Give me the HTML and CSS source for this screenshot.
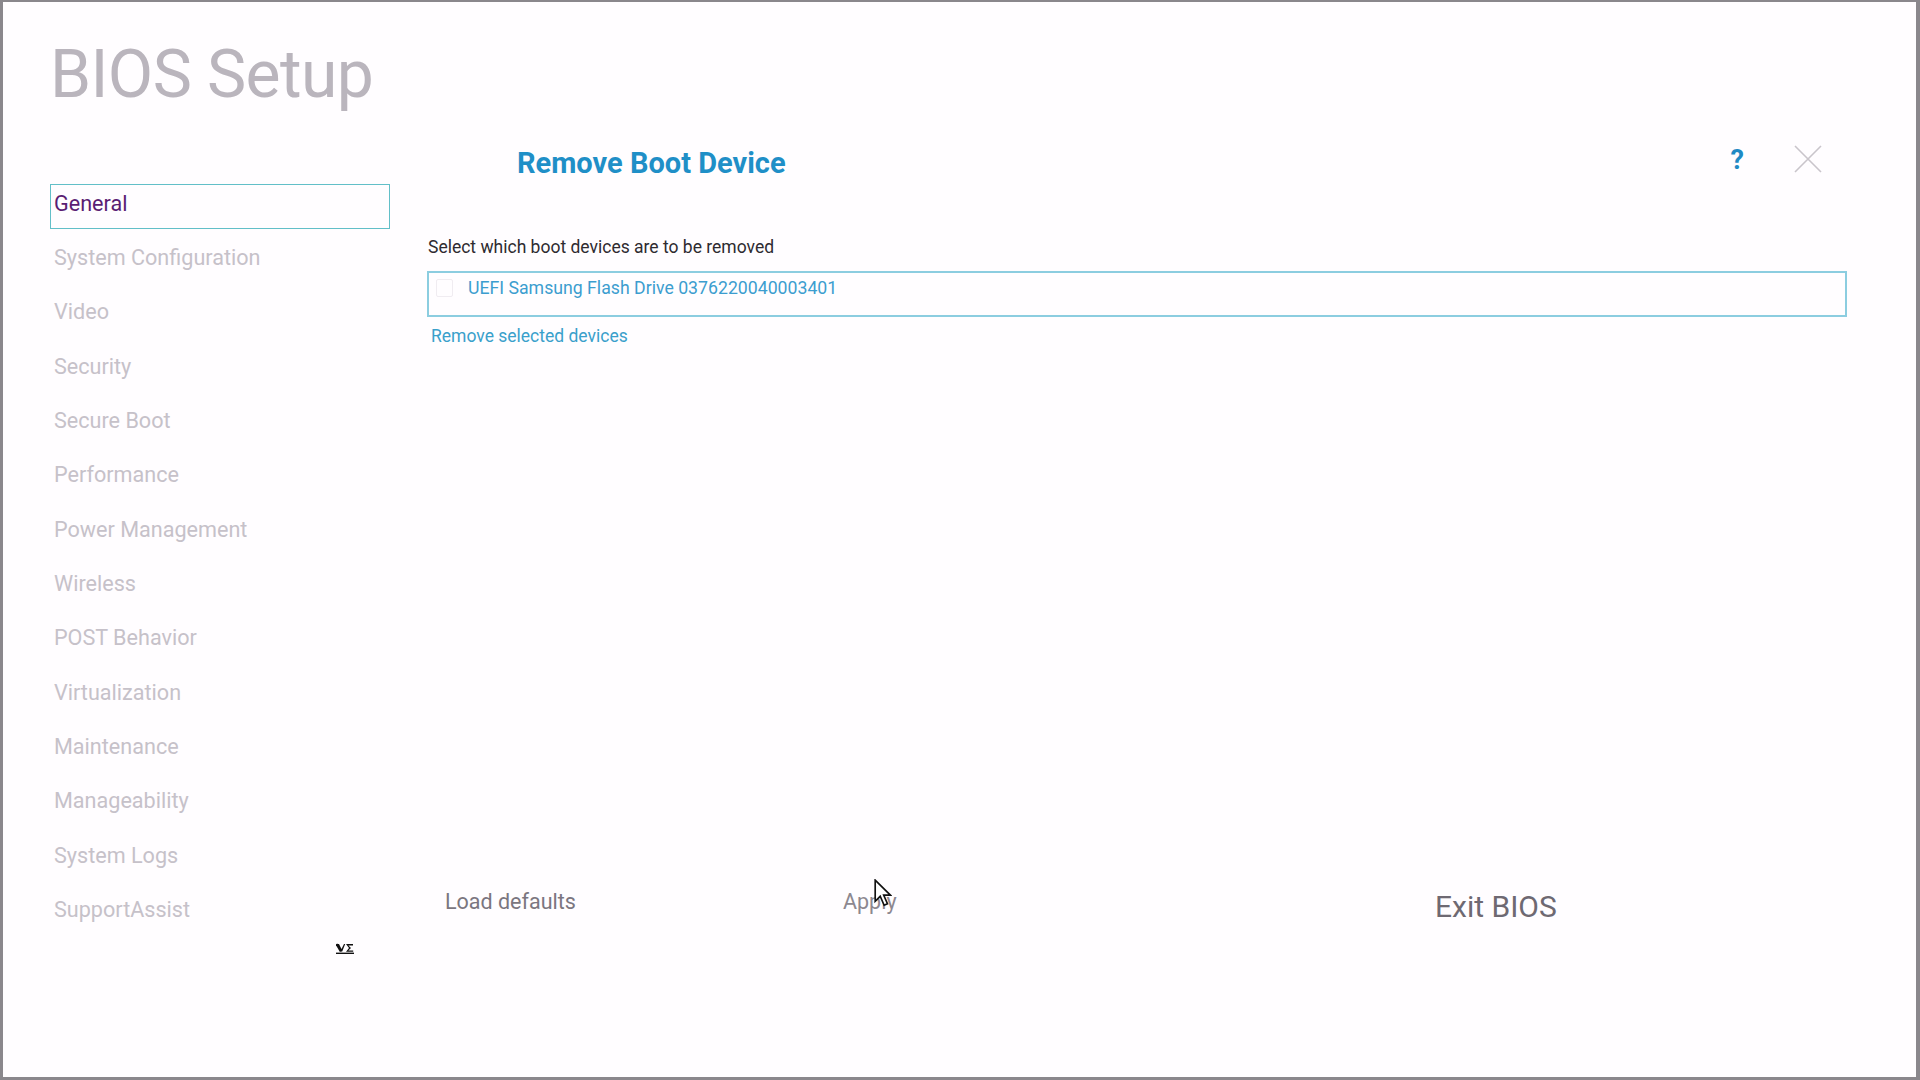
FILE: index.html
```html
<!DOCTYPE html>
<html lang="en">
<head>
<meta charset="utf-8">
<title>BIOS Setup</title>
<link rel="stylesheet" href="styles.css">
</head>
<body>
<div class="frame">
  <h1 class="app-title">BIOS Setup</h1>
  <div class="main">
    <aside class="sidebar">
      <ul class="nav">
        <li class="nav-item active">General</li>
        <li class="nav-item">System Configuration</li>
        <li class="nav-item">Video</li>
        <li class="nav-item">Security</li>
        <li class="nav-item">Secure Boot</li>
        <li class="nav-item">Performance</li>
        <li class="nav-item">Power Management</li>
        <li class="nav-item">Wireless</li>
        <li class="nav-item">POST Behavior</li>
        <li class="nav-item">Virtualization</li>
        <li class="nav-item">Maintenance</li>
        <li class="nav-item">Manageability</li>
        <li class="nav-item">System Logs</li>
        <li class="nav-item">SupportAssist</li>
      </ul>
      <div class="mini-icon">
        <svg width="18" height="12" viewBox="0 0 18 12">
          <path d="M0.5 1 L3 1 L5.5 6 L8 1 L9.2 1 L6.2 8.5 L4.8 8.5 Z" fill="#111"/>
          <path d="M0.5 1 L4.8 8.5" stroke="#111" stroke-width="2"/>
          <path d="M10 1 H17 V2.4 H12.4 L15 5 L12.4 7.6 H17.2 V8.8 H10 L13 5 Z" fill="#111"/>
          <rect x="0" y="9.6" width="18" height="1.4" fill="#111"/>
        </svg>
      </div>
    </aside>
    <section class="content">
      <div class="dialog-head">
        <h2 class="dialog-title">Remove Boot Device</h2>
        <span class="help">?</span>
        <span class="close">
          <svg width="28" height="28" viewBox="0 0 28 28">
            <path d="M1 1 L27 27 M27 1 L1 27" stroke="#c9c5cb" stroke-width="1.6"/>
          </svg>
        </span>
      </div>
      <p class="prompt">Select which boot devices are to be removed</p>
      <div class="device-list">
        <span class="checkbox"></span>
        <span class="device-name">UEFI Samsung Flash Drive 0376220040003401</span>
      </div>
      <a class="remove-link">Remove selected devices</a>
      <div class="footer">
        <span class="btn btn-load">Load defaults</span>
        <span class="btn btn-apply">Apply</span>
        <span class="btn btn-exit">Exit BIOS</span>
      </div>
    </section>
  </div>
  <svg class="cursor" width="18" height="29" viewBox="0 0 16 26">
    <path d="M1 1 L1 20 L5.5 15.5 L9 23.5 L12 22.2 L8.6 14.4 L14.6 14.4 Z" fill="#fff" stroke="#111" stroke-width="1.5" stroke-linejoin="miter"/>
  </svg>
</div>
</body>
</html>
```

FILE: styles.css
```css
* { box-sizing: border-box; }

html, body {
  margin: 0;
  padding: 0;
  background: #fff;
}

body {
  font-family: Roboto, "Liberation Sans", Arial, sans-serif;
}

.frame {
  position: relative;
  width: 1920px;
  height: 1080px;
  border-top: 2px solid #8a878c;
  border-left: 3px solid #8a878c;
  border-right: 4px solid #8a878c;
  border-bottom: 3px solid #8a878c;
  background: #fffdff;
  overflow: hidden;
}

.app-title {
  margin: 40px 0 0 47px;
  font-size: 66px;
  line-height: 66px;
  font-weight: 400;
  color: #bab5bd;
  letter-spacing: -0.6px;
}

.main {
  display: grid;
  grid-template-columns: 340px 1420px;
  column-gap: 37px;
  margin-top: 34.5px;
  margin-left: 47px;
}

/* Sidebar */
.sidebar {
  padding-top: 41px;
}

.nav {
  list-style: none;
  margin: 0;
  padding: 0;
}

.nav-item {
  height: 45px;
  margin-bottom: 9.35px;
  padding: 0 0 7px 3px;
  line-height: 38px;
  font-size: 21.6px;
  color: #c6c1c9;
  border: 1px solid transparent;
}

.nav-item:last-child {
  margin-bottom: 0;
}

.nav-item.active {
  color: #5b1d73;
  border: 1.5px solid #62bfc8;
}

.mini-icon {
  margin-top: 8px;
  padding-left: 286px;
  height: 12px;
}

.mini-icon svg { display: block; }

/* Content */
.content {
  display: flex;
  flex-direction: column;
}

.dialog-head {
  display: flex;
  align-items: center;
  height: 40px;
}

.dialog-title {
  margin: 0 0 0 90px;
  font-size: 29px;
  line-height: 40px;
  font-weight: 700;
  color: #1f8fc7;
}

.help {
  margin-left: auto;
  padding-bottom: 6px;
  font-size: 27px;
  line-height: 34px;
  font-weight: 700;
  color: #1f8ac4;
}

.close {
  margin-left: 50px;
  margin-right: 25px;
  margin-bottom: 8px;
  height: 28px;
}

.close svg { display: block; }

.prompt {
  margin: 52px 0 0 1px;
  font-size: 17.5px;
  line-height: 24px;
  color: #2e2b30;
}

.device-list {
  display: flex;
  align-items: flex-start;
  margin-top: 12px;
  height: 46px;
  padding: 3px 0 0 7px;
  border: 2px solid #8ccde0;
}

.checkbox {
  width: 17px;
  height: 18px;
  margin-top: 3px;
  border: 1px solid #f0ecf1;
  border-radius: 2px;
}

.device-name {
  margin-left: 15px;
  font-size: 17.7px;
  line-height: 24px;
  color: #3c9dcf;
}

.remove-link {
  margin: 7px 0 0 4px;
  font-size: 17.5px;
  line-height: 24px;
  color: #3aa0cb;
}

.footer {
  display: flex;
  align-items: flex-start;
  margin-top: 539px;
  padding-left: 18px;
}

.btn {
  line-height: 30px;
  white-space: nowrap;
}

.btn-load {
  width: 398px;
  font-size: 21.5px;
  color: #7b7680;
}

.btn-apply {
  width: 592px;
  font-size: 21.5px;
  color: #8d8890;
}

.btn-exit {
  margin-top: 5.5px;
  font-size: 30px;
  color: #6e6972;
}

.cursor {
  position: absolute;
  left: 871px;
  top: 877px;
}
```
